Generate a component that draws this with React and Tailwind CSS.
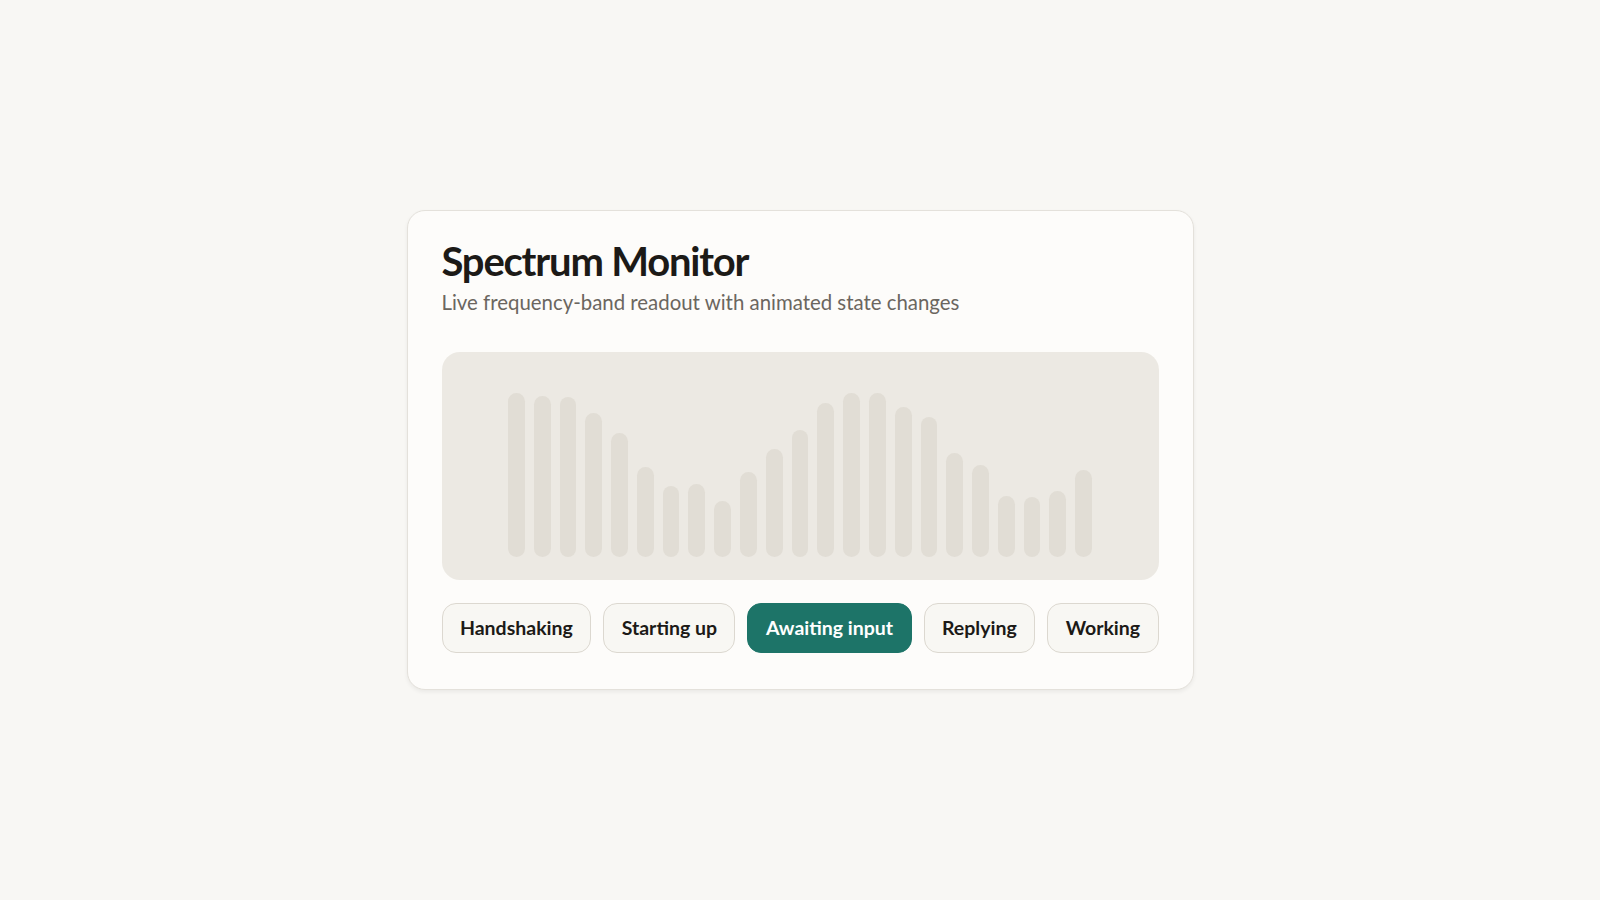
import { useState } from "react";

const bands = [164, 161, 160, 144, 124, 90, 71, 73, 56, 85, 108, 127, 154, 164, 164, 150, 140, 104, 92, 61, 60, 66, 87];

const states = ["Handshaking", "Starting up", "Awaiting input", "Replying", "Working"];

export default function App() {
  const [active, setActive] = useState("Awaiting input");

  return (
    <div className="min-h-screen bg-[#f8f7f4] flex items-center justify-center font-['Lato','Noto_Sans',sans-serif]">
      <div className="w-[787px] rounded-[18px] border border-[#e4e1db] bg-[#fdfcfa] px-[34px] pt-[30px] pb-[36px] shadow-[0_2px_4px_rgba(0,0,0,0.06)]">
        <h1 className="text-[40px] leading-none font-bold tracking-[-0.03em] text-[#1c1a17]">Spectrum Monitor</h1>
        <p className="mt-[7px] text-[20.4px] leading-[28px] text-[#6b665f]">Live frequency-band readout with animated state changes</p>

        {/* Spectrum panel */}
        <div className="mt-[36px] h-[228px] rounded-[18px] bg-[#ece9e3] flex items-end justify-center pb-[23px]">
          <div className="w-[584px] flex items-end gap-[9px]">
            {bands.map((h, i) => (
              <div key={i} className="flex-1 rounded-full bg-[#e1ddd5]" style={{ height: h }} />
            ))}
          </div>
        </div>

        {/* State switcher */}
        <div className="mt-[23px] flex gap-3">
          {states.map((s) => (
            <button
              key={s}
              onClick={() => setActive(s)}
              className={
                s === active
                  ? "flex-auto h-[50px] px-[12px] whitespace-nowrap rounded-[14px] border border-[#1d7468] bg-[#1d7468] text-white text-[19.5px] font-bold"
                  : "flex-auto h-[50px] px-[12px] whitespace-nowrap rounded-[14px] border border-[#dcd8d0] bg-[#f8f7f3] text-[#1c1a17] text-[19.5px] font-bold"
              }
            >
              {s}
            </button>
          ))}
        </div>
      </div>
    </div>
  );
}
